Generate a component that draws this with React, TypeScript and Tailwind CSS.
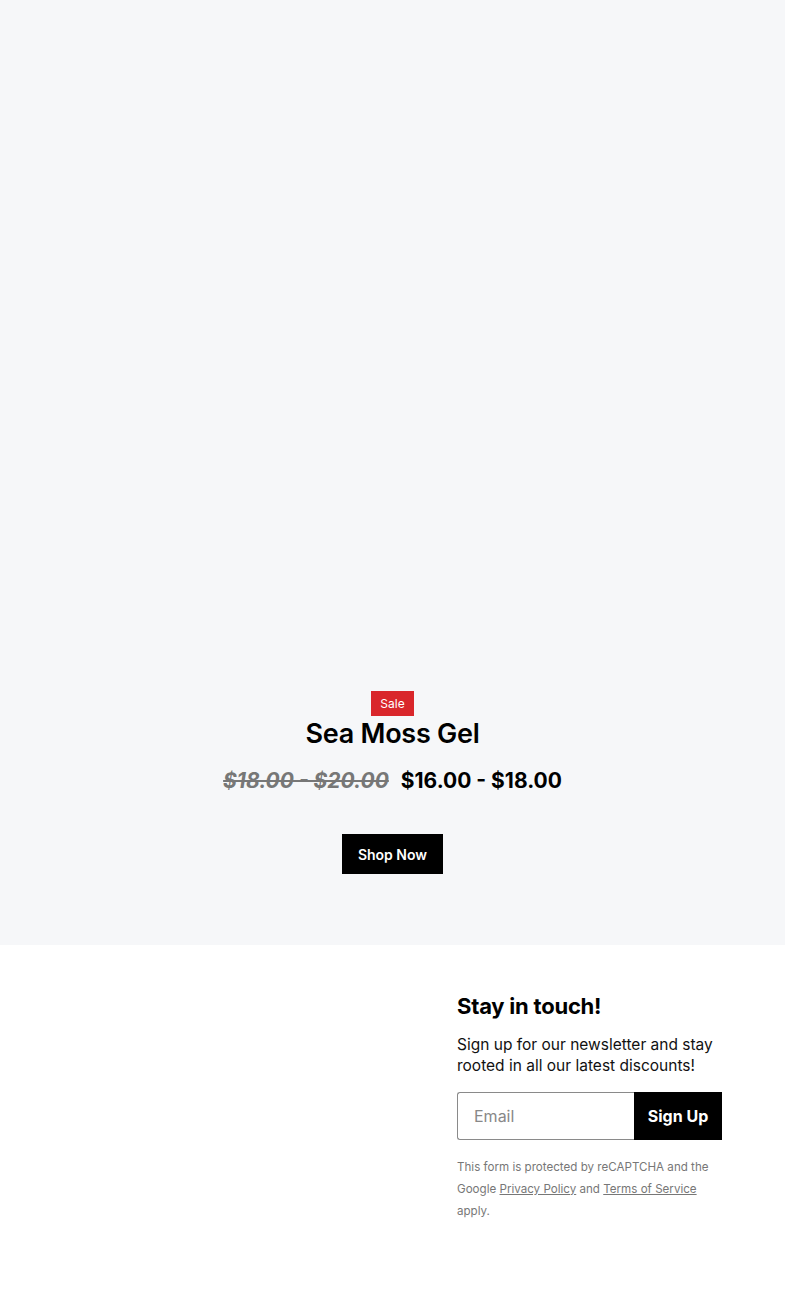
export default function App() {
  return (
    <div className="min-h-screen bg-white font-['Inter',sans-serif] text-black">
      <section className="flex flex-col items-center bg-[#f6f7f9] pb-[71px]">
        {/* product image area, empty in the capture */}
        <div className="h-[691px] w-full" />
        <span className="bg-[#d9262b] px-[9px] py-[4px] text-[12px] leading-[17px] text-white">Sale</span>
        <h2 className="mt-[1px] text-[27px] font-semibold leading-[34px] tracking-[-0.01em]">Sea Moss Gel</h2>
        <div className="mt-[15px] flex items-center gap-[12px] text-[21px] font-bold leading-[30px]">
          <span className="italic text-[#777] line-through decoration-[2px]">$18.00 - $20.00</span>
          <span>$16.00 - $18.00</span>
        </div>
        <a href="#" className="mt-[38px] flex h-[40px] w-[101px] items-center justify-center bg-black text-[14px] font-semibold text-white">
          Shop Now
        </a>
      </section>

      <footer className="grid grid-cols-[1fr_265px] pb-[80px] pr-[63px] pt-[47px]">
        <div />
        <div>
          <h3 className="text-[22px] font-bold leading-[28px] tracking-[-0.01em]">Stay in touch!</h3>
          <p className="mt-[14px] text-[15.5px] leading-[21px] text-[#111]">
            Sign up for our newsletter and stay rooted in all our latest discounts!
          </p>
          <form className="mt-[16px] flex h-[48px]">
            <input
              type="email"
              placeholder="Email"
              className="w-[177px] rounded-l-[3px] border border-[#8a8a8a] border-r-0 px-[16px] text-[16px] placeholder:text-[#888] outline-none"
            />
            <button type="button" className="flex-1 bg-black text-[16px] font-bold text-white">
              Sign Up
            </button>
          </form>
          <p className="mt-[16px] text-[11.6px] leading-[22px] text-[#777]">
            This form is protected by reCAPTCHA and the Google <span className="underline">Privacy Policy</span> and{' '}
            <span className="underline">Terms of Service</span> apply.
          </p>
        </div>
      </footer>
    </div>
  );
}
